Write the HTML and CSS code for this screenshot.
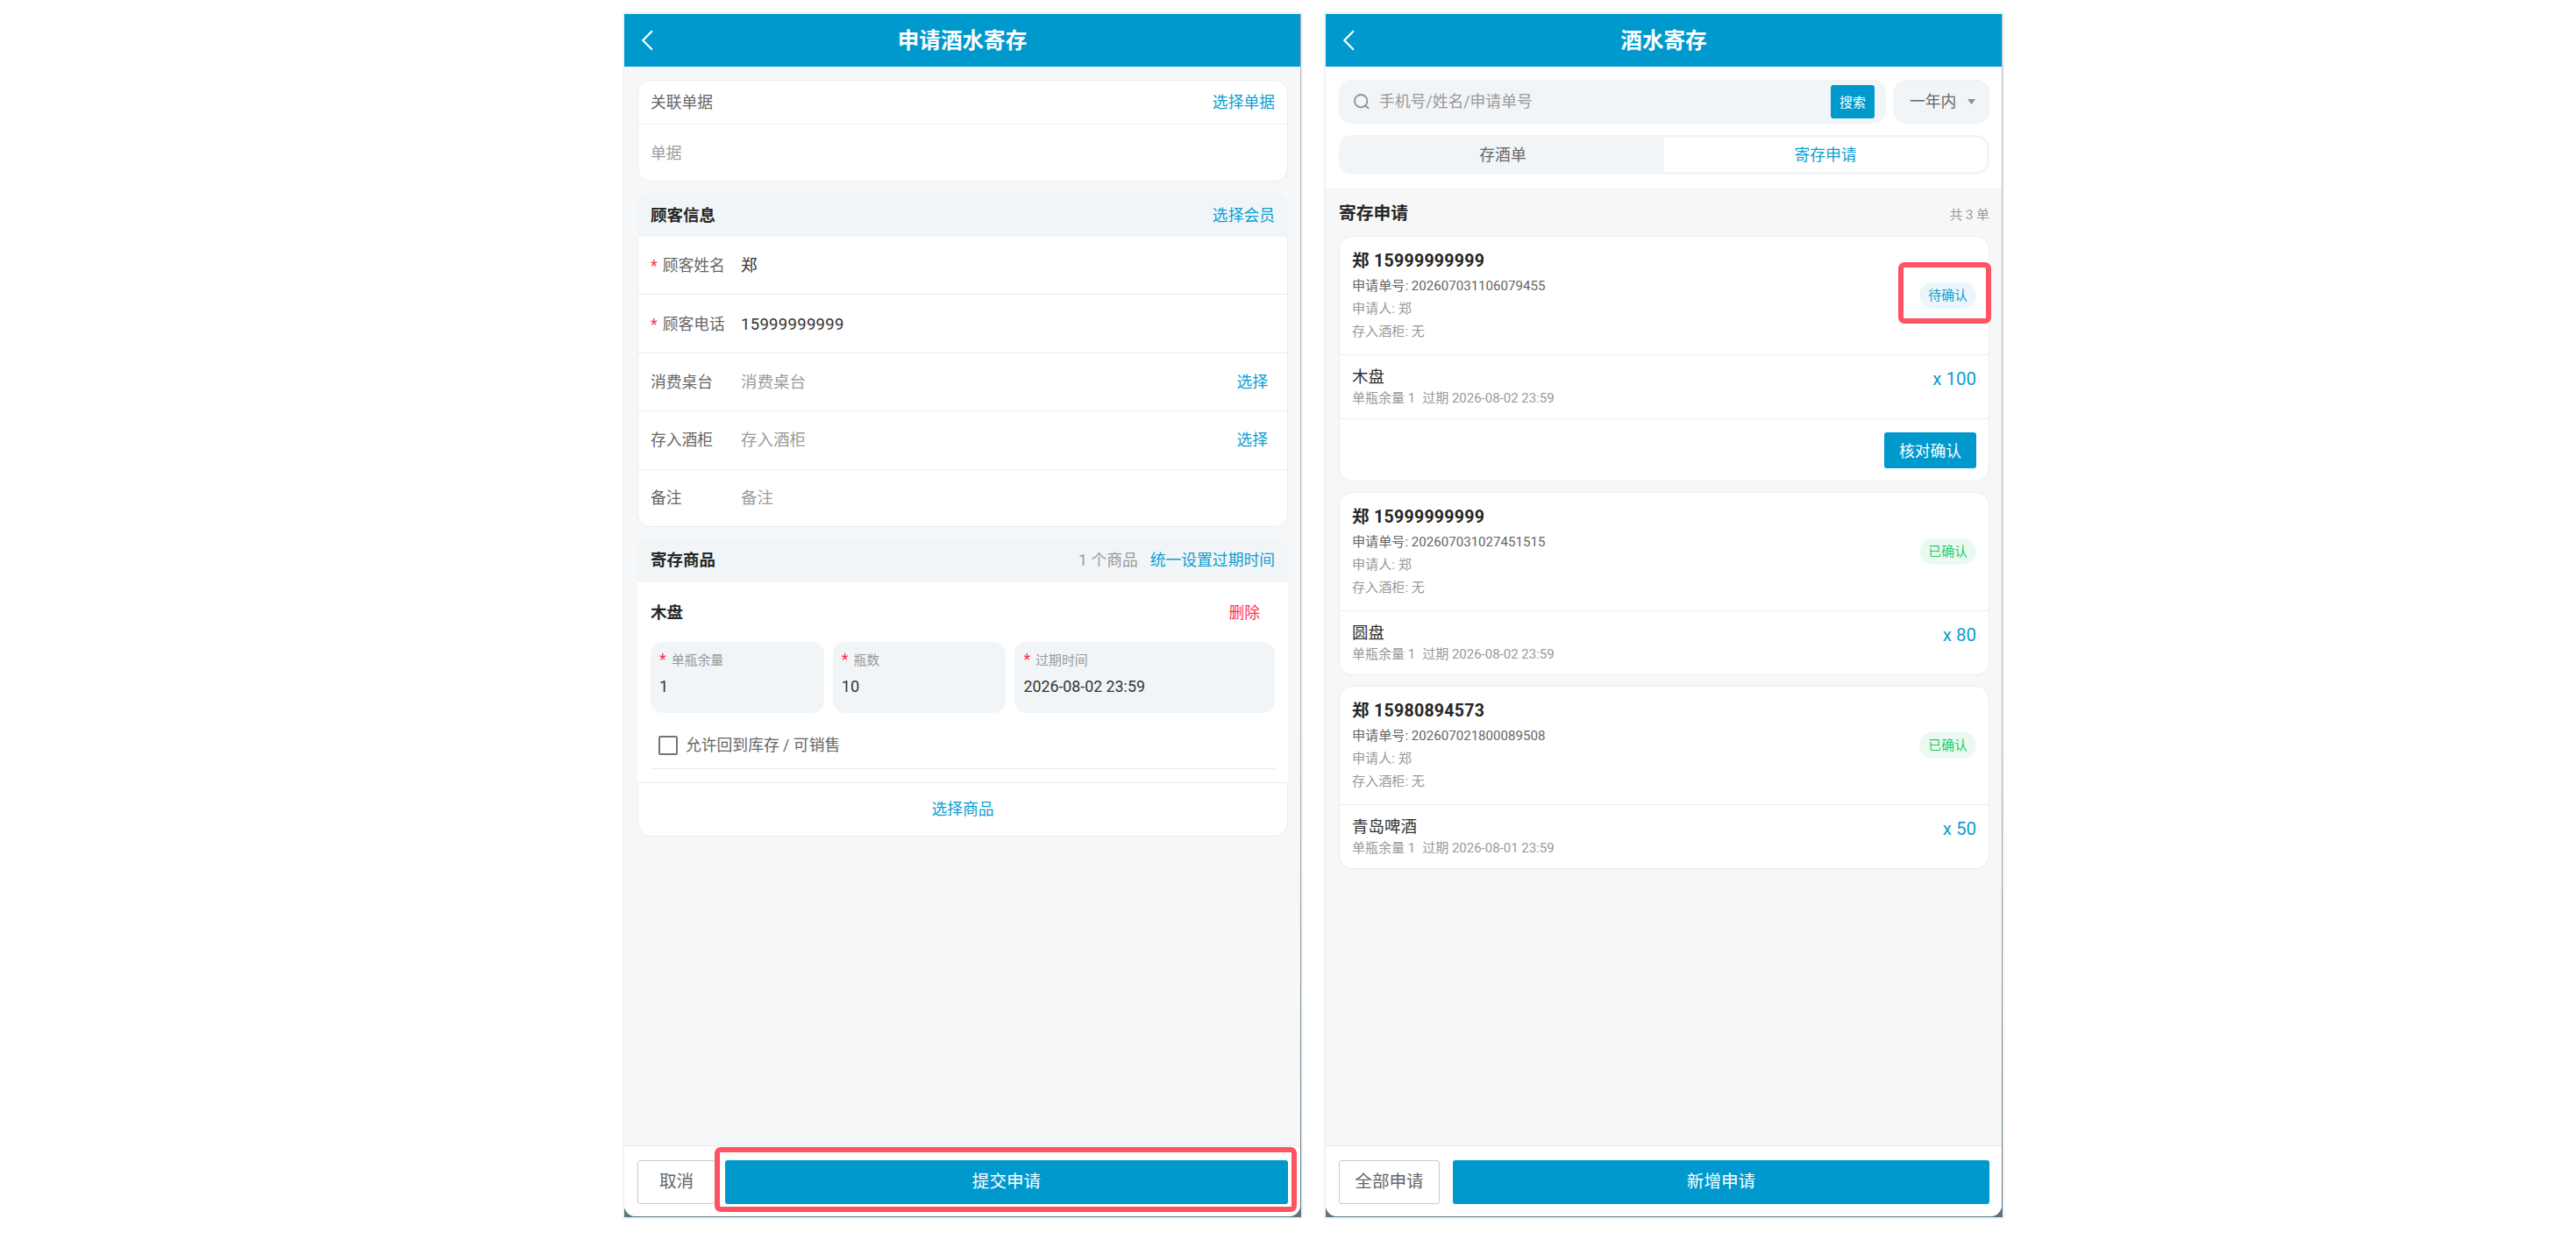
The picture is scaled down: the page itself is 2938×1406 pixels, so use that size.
FILE: index.html
```html
<!DOCTYPE html>
<html lang="zh-CN">
<head>
    <meta charset="UTF-8">
    <meta name="viewport" content="width=device-width, initial-scale=1.0">
    <title>酒水寄存</title>
    <link rel="stylesheet" href="styles.css">
</head>
<body>
    <!-- 申请酒水寄存 -->
    <div class="phone">
        <div class="screen">
            <header class="navbar">
                <svg class="back" width="14" height="24" viewBox="0 0 14 24"><path d="M12.9 1.2 2.3 12l10.6 10.8" fill="none" stroke="#fff" stroke-width="2.2"/></svg>
                <h1>申请酒水寄存</h1>
            </header>

            <main class="form">
                <section class="card bill">
                    <div class="bill-head">
                        <span class="label">关联单据</span>
                        <a class="link">选择单据</a>
                    </div>
                    <div class="bill-body">单据</div>
                </section>

                <section class="group">
                    <div class="group-head">
                        <h2>顾客信息</h2>
                        <a class="link">选择会员</a>
                    </div>
                    <div class="fields">
                        <div class="field">
                            <span class="label"><i class="star">*</i>顾客姓名</span>
                            <span class="value">郑</span>
                        </div>
                        <div class="field">
                            <span class="label"><i class="star">*</i>顾客电话</span>
                            <span class="value">15999999999</span>
                        </div>
                        <div class="field">
                            <span class="label">消费桌台</span>
                            <span class="value empty">消费桌台</span>
                            <a class="link pick">选择</a>
                        </div>
                        <div class="field">
                            <span class="label">存入酒柜</span>
                            <span class="value empty">存入酒柜</span>
                            <a class="link pick">选择</a>
                        </div>
                        <div class="field">
                            <span class="label">备注</span>
                            <span class="value empty">备注</span>
                        </div>
                    </div>
                </section>

                <section class="group">
                    <div class="group-head">
                        <h2>寄存商品</h2>
                        <span class="count">1 个商品</span>
                        <a class="link">统一设置过期时间</a>
                    </div>
                    <div class="goods">
                        <div class="goods-title">
                            <h3>木盘</h3>
                            <a class="delete">删除</a>
                        </div>
                        <div class="boxes">
                            <div class="box">
                                <span class="box-label"><i class="star">*</i>单瓶余量</span>
                                <span class="box-value">1</span>
                            </div>
                            <div class="box">
                                <span class="box-label"><i class="star">*</i>瓶数</span>
                                <span class="box-value">10</span>
                            </div>
                            <div class="box">
                                <span class="box-label"><i class="star">*</i>过期时间</span>
                                <span class="box-value date">2026-08-02 23:59</span>
                            </div>
                        </div>
                        <label class="check"><span class="tick"></span>允许回到库存 / 可销售</label>
                    </div>
                    <a class="add-goods link">选择商品</a>
                </section>
            </main>

            <footer class="footer">
                <button class="btn plain cancel">取消</button>
                <button class="btn primary">提交申请</button>
                <div class="mark mark-submit"></div>
            </footer>
        </div>
    </div>

    <!-- 酒水寄存 -->
    <div class="phone">
        <div class="screen">
            <header class="navbar">
                <svg class="back" width="14" height="24" viewBox="0 0 14 24"><path d="M12.9 1.2 2.3 12l10.6 10.8" fill="none" stroke="#fff" stroke-width="2.2"/></svg>
                <h1>酒水寄存</h1>
            </header>

            <div class="toolbar">
                <div class="search-row">
                    <div class="search">
                        <svg width="18" height="18" viewBox="0 0 18 18" fill="none" stroke="#929496" stroke-width="1.9"><circle cx="8.2" cy="8.2" r="7.2"/><path d="M13.2 13.2l3.9 3.6"/></svg>
                        <span class="search-tip">手机号/姓名/申请单号</span>
                        <button class="search-btn">搜索</button>
                    </div>
                    <div class="range">
                        <span>一年内</span>
                        <svg width="9" height="6" viewBox="0 0 9 6"><path d="M0 0h9L4.5 6z" fill="#8b8d8f"/></svg>
                    </div>
                </div>
                <div class="tabs">
                    <div class="tab">存酒单</div>
                    <div class="tab active">寄存申请</div>
                </div>
            </div>

            <main class="list">
                <div class="list-head">
                    <h2>寄存申请</h2>
                    <span>共 3 单</span>
                </div>

                <section class="card order">
                    <div class="order-head">
                        <div>
                            <h3>郑 15999999999</h3>
                            <p class="no">申请单号: 202607031106079455</p>
                            <p>申请人: 郑</p>
                            <p>存入酒柜: 无</p>
                        </div>
                        <span class="badge wait">待确认</span>
                        <div class="mark mark-badge"></div>
                    </div>
                    <div class="order-item">
                        <div>
                            <h4>木盘</h4>
                            <p><span>单瓶余量 1</span><span>过期 2026-08-02 23:59</span></p>
                        </div>
                        <span class="num">x 100</span>
                    </div>
                    <div class="order-foot">
                        <button class="verify">核对确认</button>
                    </div>
                </section>

                <section class="card order">
                    <div class="order-head">
                        <div>
                            <h3>郑 15999999999</h3>
                            <p class="no">申请单号: 202607031027451515</p>
                            <p>申请人: 郑</p>
                            <p>存入酒柜: 无</p>
                        </div>
                        <span class="badge done">已确认</span>
                    </div>
                    <div class="order-item">
                        <div>
                            <h4>圆盘</h4>
                            <p><span>单瓶余量 1</span><span>过期 2026-08-02 23:59</span></p>
                        </div>
                        <span class="num">x 80</span>
                    </div>
                </section>

                <section class="card order">
                    <div class="order-head">
                        <div>
                            <h3>郑 15980894573</h3>
                            <p class="no">申请单号: 202607021800089508</p>
                            <p>申请人: 郑</p>
                            <p>存入酒柜: 无</p>
                        </div>
                        <span class="badge done">已确认</span>
                    </div>
                    <div class="order-item">
                        <div>
                            <h4>青岛啤酒</h4>
                            <p><span>单瓶余量 1</span><span>过期 2026-08-01 23:59</span></p>
                        </div>
                        <span class="num">x 50</span>
                    </div>
                </section>
            </main>

            <footer class="footer wide-gap">
                <button class="btn plain all">全部申请</button>
                <button class="btn primary">新增申请</button>
            </footer>
        </div>
    </div>
</body>
</html>
```
FILE: styles.css
```css
* {
    margin: 0;
    padding: 0;
    box-sizing: border-box;
}

body {
    display: flex;
    gap: 24px;
    padding: 14px 0 0 710px;
    background: #fff;
    font-family: Roboto, "Noto Sans CJK SC", sans-serif;
    font-size: 17.8px;
    line-height: 24px;
    color: #333;
}

button {
    font-family: inherit;
    border: none;
}

h1, h2, h3, h4 {
    font-weight: 700;
}

/* 手机外框 */
.phone {
    width: 776px;
    height: 1376px;
    border: 2px solid #f1f2f4;
    background: linear-gradient(#b4b7b9 0%, #b0b4b7 60%, #5c7480 100%);
}

.screen {
    display: flex;
    flex-direction: column;
    width: 771px;
    height: 1371px;
    background: #f6f7f9;
    border-radius: 0 0 13px 13px;
    overflow: hidden;
}

.navbar {
    display: grid;
    grid-template-columns: 60px 1fr 60px;
    align-items: center;
    height: 60px;
    background: #0099cd;
    color: #fff;
}

.navbar .back {
    margin-left: 19px;
}

.navbar h1 {
    padding-top: 1px;
    text-align: center;
    font-size: 24.6px;
    line-height: 36px;
}

.link {
    color: #0d9dd0;
}

.label {
    color: #666;
}

.star {
    color: #ff2d4f;
    font-style: normal;
    margin-right: 6px;
}

.card {
    background: #fff;
    border: 1px solid #ebecee;
    border-radius: 15px;
}

/* 申请表单 */
.form {
    flex: 1;
    display: flex;
    flex-direction: column;
    gap: 13px;
    padding: 15px 14px 0 15px;
}

.bill {
    height: 116px;
}

.bill-head {
    display: flex;
    justify-content: space-between;
    align-items: center;
    height: 50px;
    padding: 0 14px;
    border-bottom: 1px solid #ebecec;
}

.bill-body {
    padding: 21px 14px;
    color: #9c9c9c;
}

.group-head {
    display: flex;
    align-items: center;
    height: 50px;
    padding: 1px 15px 0;
    background: #f1f5f8;
    border-radius: 15px 15px 0 0;
}

.group-head h2 {
    flex: 1;
    font-size: 18.5px;
    color: #262626;
}

.group-head .count {
    margin-right: 14px;
    color: #999;
}

.fields {
    background: #fff;
    border: 1px solid #ebecee;
    border-top: none;
    border-radius: 0 0 15px 15px;
}

.field {
    display: flex;
    align-items: center;
    height: 66.4px;
    padding: 1px 22px 0 14px;
    border-bottom: 1px solid #ebecec;
}

.field:last-child {
    height: 64.4px;
    border-bottom: none;
}

.field .label {
    width: 103px;
}

.field .value {
    flex: 1;
    font-size: 18.5px;
    color: #333;
    letter-spacing: 0.3px;
}

.field .value.empty {
    color: #9c9c9c;
    letter-spacing: 0;
}

.goods {
    height: 228px;
    padding: 0 15px;
    background: #fff;
}

.goods-title {
    display: flex;
    justify-content: space-between;
    align-items: center;
    height: 68px;
    padding: 2px 17px 0 0;
}

.goods-title h3 {
    font-size: 18.5px;
    color: #262626;
}

.delete {
    color: #ff3355;
}

.boxes {
    display: grid;
    grid-template-columns: 2fr 2fr 3fr;
    gap: 10px;
}

.box {
    display: flex;
    flex-direction: column;
    height: 81px;
    padding: 9px 10px;
    background: #f1f5f8;
    border-radius: 14px;
}

.box-label {
    font-size: 14.9px;
    color: #999;
}

.box-label .star {
    font-size: 17.8px;
    line-height: 20px;
}

.box-value {
    margin-top: 6px;
    font-size: 18.2px;
    color: #333;
    letter-spacing: 0.1px;
}

.box-value.date {
    font-size: 17.8px;
    letter-spacing: 0;
}

.check {
    display: flex;
    align-items: center;
    height: 64px;
    padding: 12px 0 0 9px;
    color: #666;
    border-bottom: 1px solid #e9eaea;
}

.tick {
    width: 22px;
    height: 22px;
    margin-right: 9px;
    border: 2px solid #757575;
    border-radius: 2px;
}

.add-goods {
    display: flex;
    align-items: center;
    justify-content: center;
    height: 62px;
    padding-top: 1px;
    background: #fff;
    border: 1px solid #ebecee;
    border-radius: 0 0 15px 15px;
}

/* 底部操作栏 */
.footer {
    position: relative;
    display: flex;
    gap: 11px;
    height: 81px;
    margin-top: auto;
    padding: 16px 14px 0 15px;
    background: #fff;
    border-top: 1px solid #e6e8e9;
}

.footer.wide-gap {
    gap: 15px;
}

.btn {
    height: 50px;
    font-size: 19.6px;
    line-height: 28px;
    border-radius: 3px;
}

.btn.plain {
    background: #fff;
    border: 1px solid #ccc;
    color: #666;
}

.btn.primary {
    flex: 1;
    background: #0099cd;
    color: #fff;
}

.cancel {
    width: 89px;
}

.all {
    width: 115px;
}

/* 红框标注 */
.mark {
    position: absolute;
    border: 6px solid #ff5263;
    border-radius: 7px;
}

.mark-submit {
    left: 103px;
    top: 1px;
    width: 664px;
    height: 74px;
}

.mark-badge {
    right: -3px;
    top: 29px;
    width: 106px;
    height: 70px;
}

/* 搜索和标签 */
.toolbar {
    height: 138px;
    padding: 15px 14px 0 15px;
    background: #fff;
}

.search-row {
    display: flex;
    gap: 9px;
}

.search {
    flex: 1;
    display: flex;
    align-items: center;
    height: 50px;
    padding: 0 13px 0 17px;
    background: #f1f5f8;
    border-radius: 14px;
}

.search-tip {
    flex: 1;
    margin-left: 11px;
    color: #999;
}

.search-btn {
    width: 50px;
    height: 38px;
    padding-bottom: 2px;
    background: #0099cd;
    border-radius: 3px;
    color: #fff;
    font-size: 14.9px;
}

.range {
    display: flex;
    align-items: center;
    justify-content: space-between;
    width: 109px;
    height: 50px;
    padding: 0 15px 0 17px;
    background: #f1f5f8;
    border: 1px solid #edf0f2;
    border-radius: 14px;
    color: #666;
}

.tabs {
    display: flex;
    height: 45px;
    margin-top: 13px;
    padding: 3px;
    background: #f1f5f8;
    border-radius: 15px;
}

.tab {
    flex: 1;
    text-align: center;
    line-height: 39px;
    color: #666;
}

.tab.active {
    background: #fff;
    border-radius: 3px 12px 12px 3px;
    color: #0d9dd0;
}

/* 申请列表 */
.list {
    flex: 1;
    padding: 0 14px 0 15px;
}

.list-head {
    display: flex;
    justify-content: space-between;
    align-items: center;
    height: 55px;
    padding-top: 4px;
}

.list-head h2 {
    font-size: 19.8px;
    color: #262626;
}

.list-head span {
    padding-top: 3px;
    font-size: 14.9px;
    color: #999;
}

.order {
    margin-bottom: 12.5px;
}

.order-head {
    position: relative;
    display: flex;
    justify-content: space-between;
    align-items: center;
    height: 134.5px;
    padding: 0 14px;
    border-bottom: 1px solid #ebecec;
}

.order-head h3 {
    font-size: 19.5px;
    line-height: 31px;
    color: #262626;
    letter-spacing: 0.3px;
}

.order-head p {
    font-size: 15.1px;
    line-height: 25.8px;
    color: #999;
}

.order-head .no {
    padding-top: 1px;
    color: #666;
}

.badge {
    height: 30px;
    padding: 0 10px;
    border-radius: 15px;
    font-size: 14.9px;
    line-height: 30px;
}

.badge.wait {
    background: #eaf6fa;
    color: #0d9dd0;
}

.badge.done {
    background: #ebfaf1;
    color: #1ecb63;
}

.order-item {
    display: flex;
    justify-content: space-between;
    height: 72px;
    padding: 13px 14px 0;
}

.order-item h4 {
    font-size: 18.5px;
    font-weight: 400;
    color: #333;
}

.order-item p {
    display: flex;
    gap: 8px;
    font-size: 15px;
    color: #999;
}

.num {
    padding-top: 2px;
    font-size: 20.5px;
    color: #0d9dd0;
}

.order-foot {
    display: flex;
    justify-content: flex-end;
    height: 71px;
    padding: 15px 14px 0;
    border-top: 1px solid #ebecec;
}

.verify {
    width: 105px;
    height: 41px;
    padding-bottom: 1px;
    background: #0099cd;
    border-radius: 3px;
    color: #fff;
    font-size: 17.8px;
}
```
